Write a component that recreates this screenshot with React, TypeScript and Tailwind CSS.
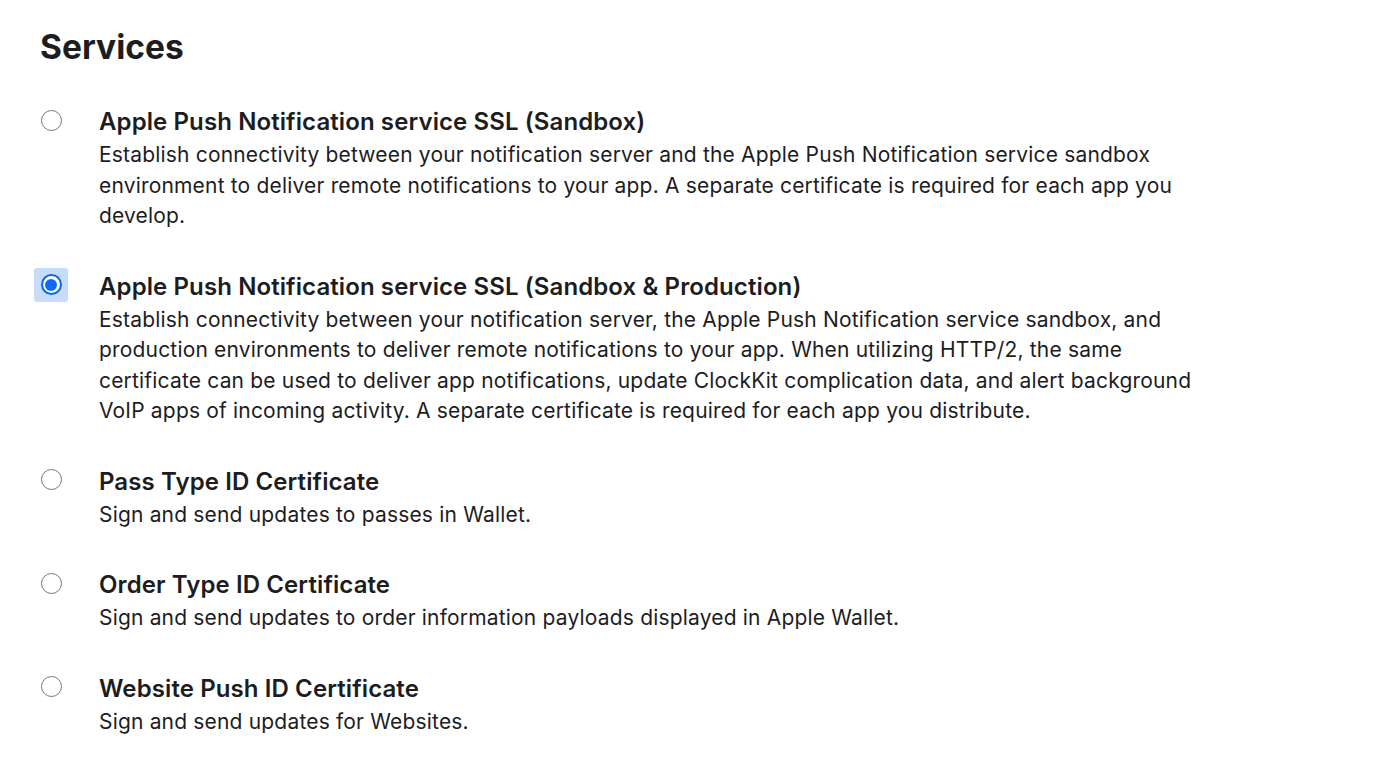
import { useState } from "react"

type Service = {
  id: string
  title: string
  description: string
}

const services: Service[] = [
  {
    id: "apns-sandbox",
    title: "Apple Push Notification service SSL (Sandbox)",
    description:
      "Establish connectivity between your notification server and the Apple Push Notification service sandbox environment to deliver remote notifications to your app. A separate certificate is required for each app you develop.",
  },
  {
    id: "apns-production",
    title: "Apple Push Notification service SSL (Sandbox & Production)",
    description:
      "Establish connectivity between your notification server, the Apple Push Notification service sandbox, and production environments to deliver remote notifications to your app. When utilizing HTTP/2, the same certificate can be used to deliver app notifications, update ClockKit complication data, and alert background VoIP apps of incoming activity. A separate certificate is required for each app you distribute.",
  },
  {
    id: "pass-type",
    title: "Pass Type ID Certificate",
    description: "Sign and send updates to passes in Wallet.",
  },
  {
    id: "order-type",
    title: "Order Type ID Certificate",
    description: "Sign and send updates to order information payloads displayed in Apple Wallet.",
  },
  {
    id: "website-push",
    title: "Website Push ID Certificate",
    description: "Sign and send updates for Websites.",
  },
]

function Radio({ checked }: { checked: boolean }) {
  if (checked) {
    // selected + focused, with the light blue focus square
    return (
      <span className="flex h-[34px] w-[34px] shrink-0 items-center justify-center rounded-[3px] bg-[#c5dcfa]">
        <span className="flex h-[21px] w-[21px] items-center justify-center rounded-full border-2 border-[#0b67e8] bg-white">
          <span className="h-[12px] w-[12px] rounded-full bg-[#0a6cf5]" />
        </span>
      </span>
    )
  }
  return <span className="block h-[21px] w-[21px] shrink-0 rounded-full border border-[#767676] bg-white" />
}

export default function App() {
  const [selected, setSelected] = useState("apns-production")

  return (
    <div className="min-h-screen bg-white pl-10 pt-[26px] font-['Inter','Helvetica_Neue','Liberation_Sans',sans-serif] text-[#1d1d1f]">
      <h1 className="text-[33.5px] font-bold leading-[42px]">Services</h1>

      {/* Liste der Dienste */}
      <div className="mt-[37px] flex flex-col gap-[38px]">
        {services.map((s) => (
          <label key={s.id} className="flex cursor-pointer" onClick={() => setSelected(s.id)}>
            <div className="flex h-[30px] w-[22px] shrink-0 items-center justify-center">
              <Radio checked={selected === s.id} />
            </div>
            <div className="ml-[37px] w-[1110px]">
              <div className="text-[24px] font-semibold leading-[33px] tracking-[0.1px]">{s.title}</div>
              <p className="mt-[2px] text-[21px] leading-[30.5px] tracking-[0.18px] text-[#1d1d1f]">{s.description}</p>
            </div>
          </label>
        ))}
      </div>
    </div>
  )
}
